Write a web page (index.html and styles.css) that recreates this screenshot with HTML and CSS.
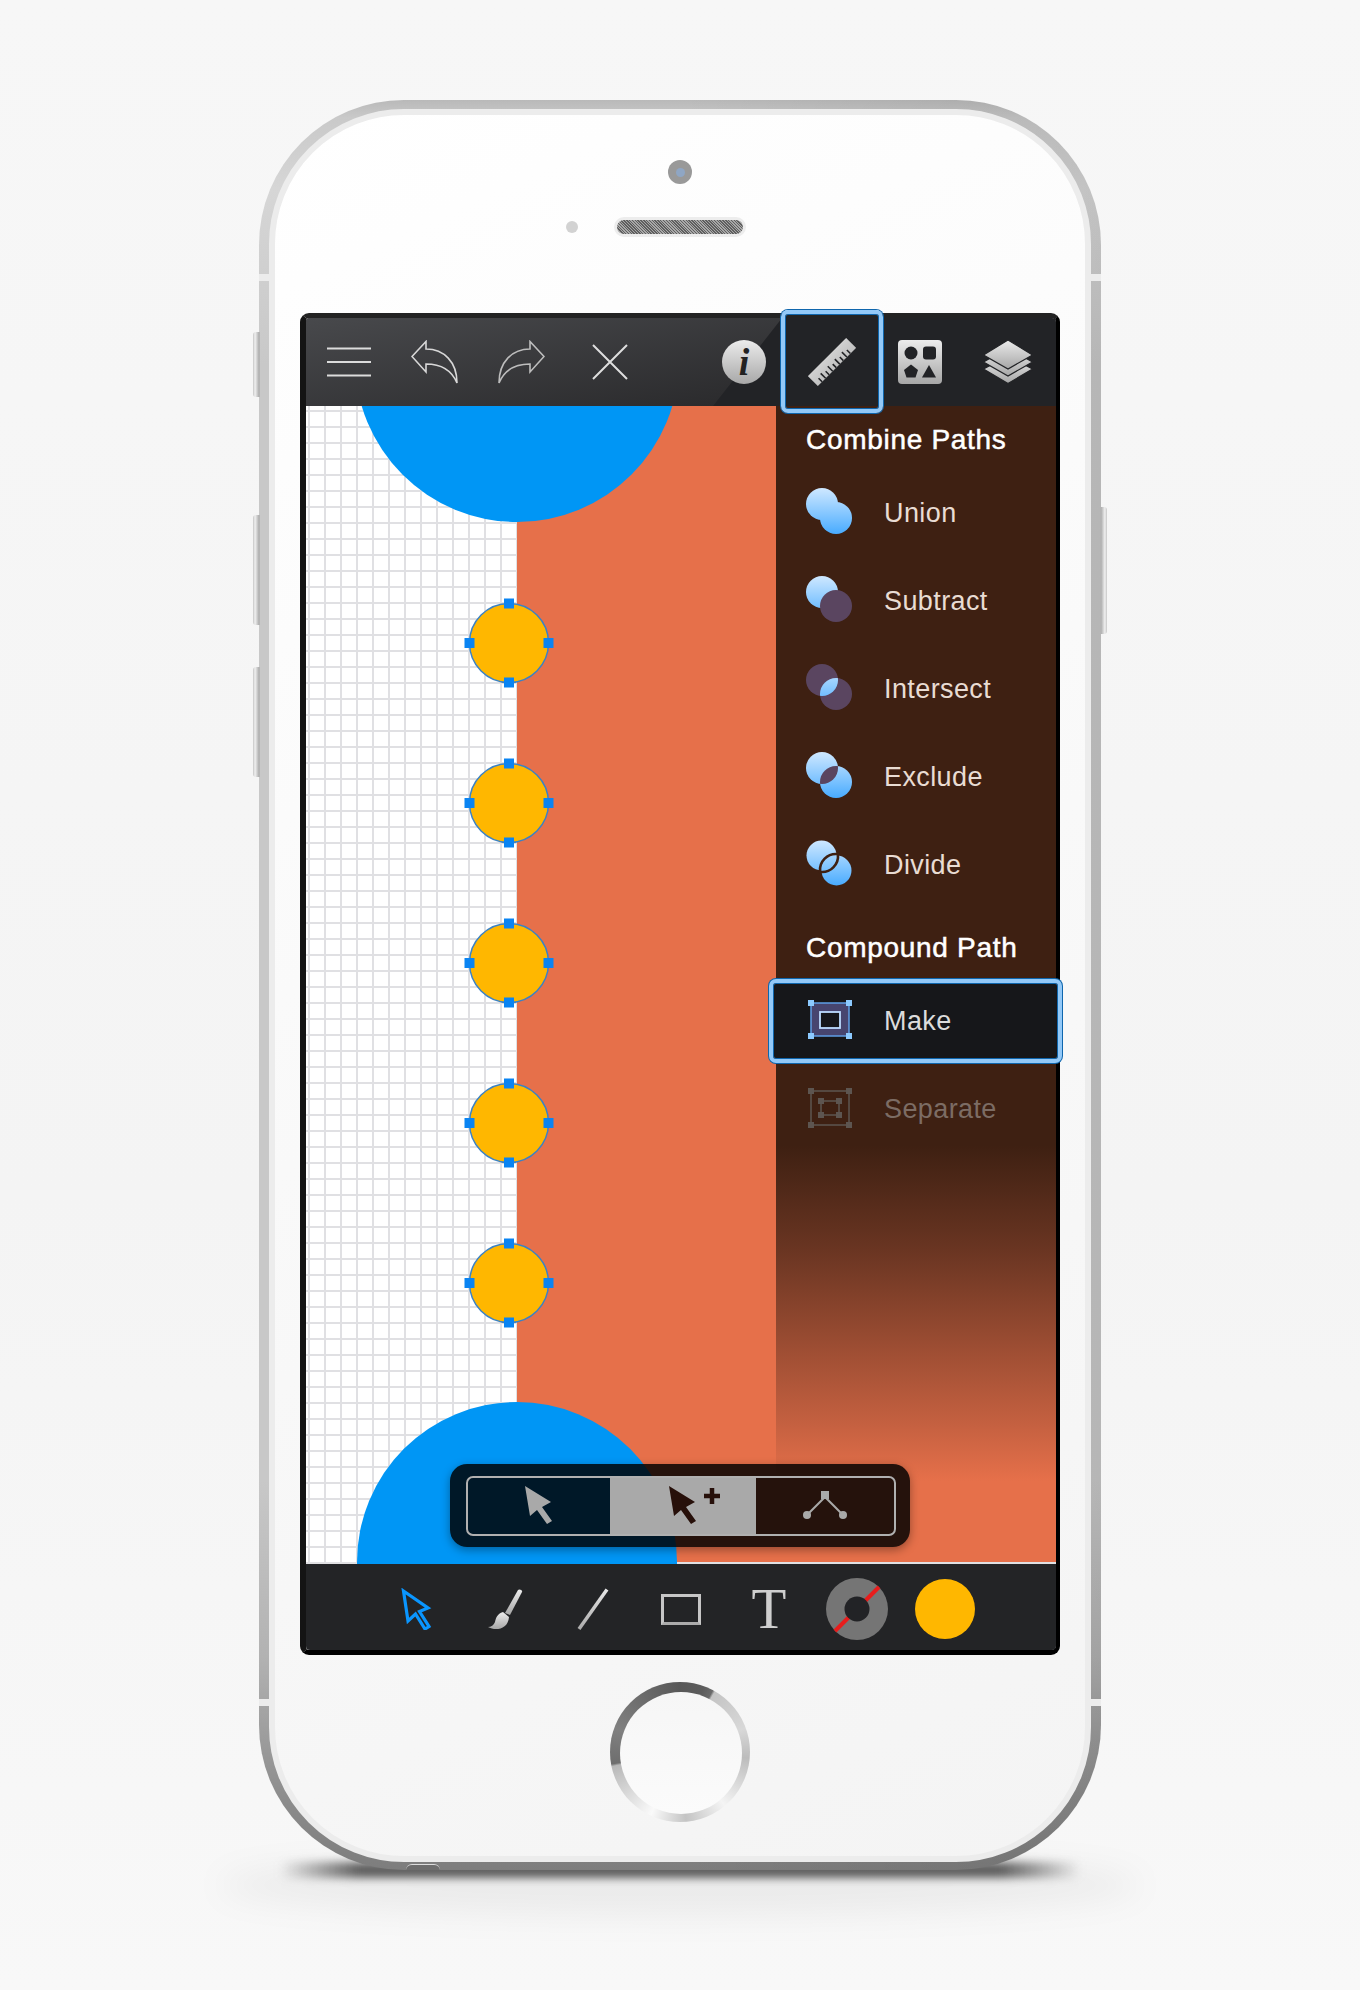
FILE: index.html
```html
<!DOCTYPE html>
<html lang="en">
<head>
    <meta charset="UTF-8">
    <meta name="viewport" content="width=device-width, initial-scale=1.0">
    <title>Combine Paths</title>
    <link rel="stylesheet" href="styles.css">
</head>
<body>
    <div class="phone">
        <span class="side-btn btn-mute"></span>
        <span class="side-btn btn-up"></span>
        <span class="side-btn btn-down"></span>
        <span class="side-btn btn-power"></span>
        <span class="band-mark mark-tl"></span>
        <span class="band-mark mark-tr"></span>
        <span class="band-mark mark-bl"></span>
        <span class="band-mark mark-br"></span>
        <span class="jack"></span>

        <div class="face">
            <div class="camera"><span class="lens"></span></div>
            <div class="sensor-row">
                <span class="sensor-dot"></span>
                <span class="speaker"></span>
            </div>

            <div class="screen">
                <!-- top toolbar -->
                <div class="topbar">
                    <div class="tool-group">
                        <button class="tool">
                            <svg width="44" height="30" viewBox="0 0 44 30"><path d="M0 1.5H44M0 15H44M0 28.500H44" fill="none" stroke="#dcdcdc" stroke-width="2"/></svg>
                        </button>
                        <button class="tool">
                            <svg width="48" height="44" viewBox="0 0 48 44"><path d="M1 16.500 15 1.500V9C33 9 46 22 46 43 41 31 30 24 15 24V32Z" fill="none" stroke="#d8d8d8" stroke-width="1.600"/></svg>
                        </button>
                        <button class="tool">
                            <svg width="48" height="44" viewBox="0 0 48 44"><path d="M47 16.500 33 1.500V9C15 9 2 22 2 43 7 31 18 24 33 24V32Z" fill="none" stroke="#bdbdbd" stroke-width="1.600"/></svg>
                        </button>
                        <button class="tool tool-close">
                            <svg width="36" height="36" viewBox="0 0 36 36"><path d="M1 1 35 35M35 1 1 35" fill="none" stroke="#dedede" stroke-width="2"/></svg>
                        </button>
                    </div>
                    <div class="tool-group">
                        <button class="tool tool-wide"><span class="info-badge">i</span></button>
                        <button class="tool tool-wide is-active">
                            <svg width="48" height="48" viewBox="0 0 48 48">
                                <defs>
                                    <linearGradient id="metal" x1="0" y1="0" x2="0" y2="1">
                                        <stop offset="0" stop-color="#ececec"/>
                                        <stop offset="1" stop-color="#a6a6a6"/>
                                    </linearGradient>
                                    <linearGradient id="metalAcross" gradientUnits="userSpaceOnUse" x1="24" y1="0" x2="24" y2="48">
                                        <stop offset="0" stop-color="#e4e4e4"/>
                                        <stop offset="1" stop-color="#adadad"/>
                                    </linearGradient>
                                </defs>
                                <g transform="rotate(-45 24 24)">
                                    <rect x="-3" y="17" width="54" height="14" fill="url(#metalAcross)"/>
                                    <path d="M3 31V26M8 31V24M13 31V26M18 31V24M23 31V26M28 31V24M33 31V26M38 31V24M43 31V26" stroke="#222326" stroke-width="1.600"/>
                                </g>
                            </svg>
                        </button>
                        <button class="tool tool-wide">
                            <svg width="44" height="44" viewBox="0 0 44 44">
                                <rect width="44" height="44" rx="4" fill="url(#metal)"/>
                                <circle cx="13" cy="13" r="6.500" fill="#222326"/>
                                <rect x="25" y="6.500" width="13" height="13" rx="3" fill="#222326"/>
                                <path d="M13 24.500 20 30 17.500 37.500H8.500L6 30Z" fill="#222326"/>
                                <path d="M31 25 38 37.500H24Z" fill="#222326"/>
                            </svg>
                        </button>
                        <button class="tool tool-wide">
                            <svg width="50" height="44" viewBox="-1 0 50 44">
                                <g fill="url(#metal)" stroke="#222326" stroke-width="1.200">
                                    <path d="M24 16 48.500 29 24 43.500 -.5 29Z"/>
                                    <path d="M24 8 48.500 22 24 36 -.5 22Z"/>
                                    <path d="M24 0 48.500 15 24 29 -.5 15Z"/>
                                </g>
                            </svg>
                        </button>
                    </div>
                </div>

                <!-- drawing area -->
                <div class="canvas">
                    <div class="paper"></div>
                    <div class="fill">
                        <div class="panel">
                            <h3 class="panel-title">Combine Paths</h3>
                            <div class="menu-row">
                                <svg class="menu-icon" viewBox="0 0 46 46">
                                    <defs>
                                        <linearGradient id="sky" gradientUnits="userSpaceOnUse" x1="0" y1="0" x2="0" y2="46">
                                            <stop offset="0" stop-color="#cfe8ff"/>
                                            <stop offset=".68" stop-color="#74bfff"/>
                                            <stop offset="1" stop-color="#48abff"/>
                                        </linearGradient>
                                        <clipPath id="leftDisc"><circle cx="16" cy="16" r="16"/></clipPath>
                                    </defs>
                                    <circle cx="16" cy="16" r="16" fill="url(#sky)"/>
                                    <circle cx="30" cy="30" r="16" fill="url(#sky)"/>
                                </svg>
                                <span>Union</span>
                            </div>
                            <div class="menu-row">
                                <svg class="menu-icon" viewBox="0 0 46 46">
                                    <circle cx="16" cy="16" r="16" fill="url(#sky)"/>
                                    <circle cx="30" cy="30" r="16" fill="#5a4560"/>
                                </svg>
                                <span>Subtract</span>
                            </div>
                            <div class="menu-row">
                                <svg class="menu-icon" viewBox="0 0 46 46">
                                    <circle cx="16" cy="16" r="16" fill="#5a4560"/>
                                    <circle cx="30" cy="30" r="16" fill="#5a4560"/>
                                    <circle cx="30" cy="30" r="16" fill="url(#sky)" clip-path="url(#leftDisc)"/>
                                </svg>
                                <span>Intersect</span>
                            </div>
                            <div class="menu-row">
                                <svg class="menu-icon" viewBox="0 0 46 46">
                                    <circle cx="16" cy="16" r="16" fill="url(#sky)"/>
                                    <circle cx="30" cy="30" r="16" fill="url(#sky)"/>
                                    <circle cx="30" cy="30" r="16" fill="#5a4560" clip-path="url(#leftDisc)"/>
                                </svg>
                                <span>Exclude</span>
                            </div>
                            <div class="menu-row">
                                <svg class="menu-icon" viewBox="0 0 46 46">
                                    <circle cx="15.500" cy="15.500" r="15" fill="url(#sky)"/>
                                    <circle cx="30.500" cy="30.500" r="15" fill="url(#sky)"/>
                                    <path d="M31.900 14.100A16 16 0 0 1 14.100 31.900 16 16 0 0 1 31.900 14.100Z" fill="url(#sky)" stroke="#3e2012" stroke-width="2.600"/>
                                </svg>
                                <span>Divide</span>
                            </div>
                            <h3 class="panel-title title-compound">Compound Path</h3>
                            <div class="menu-row is-selected">
                                <svg class="menu-icon" viewBox="0 0 46 46">
                                    <rect x="5" y="5" width="38" height="33" fill="#47456f" stroke="#5f9ee6" stroke-width="1.500"/>
                                    <rect x="14" y="14" width="20" height="16" fill="#16171a" stroke="#bddcff" stroke-width="1.800"/>
                                    <g fill="#8ccaff">
                                        <rect x="2" y="2" width="6" height="6"/><rect x="40" y="2" width="6" height="6"/>
                                        <rect x="2" y="35" width="6" height="6"/><rect x="40" y="35" width="6" height="6"/>
                                    </g>
                                </svg>
                                <span>Make</span>
                            </div>
                            <div class="menu-row is-disabled">
                                <svg class="menu-icon" viewBox="0 0 46 46">
                                    <g fill="none" stroke="#5d5550" stroke-width="1.500">
                                        <rect x="5" y="5" width="38" height="34"/>
                                        <rect x="15" y="15" width="18" height="14"/>
                                    </g>
                                    <g fill="#5d5550">
                                        <rect x="2" y="2" width="6" height="6"/><rect x="40" y="2" width="6" height="6"/>
                                        <rect x="2" y="36" width="6" height="6"/><rect x="40" y="36" width="6" height="6"/>
                                        <rect x="12" y="12" width="6" height="6"/><rect x="30" y="12" width="6" height="6"/>
                                        <rect x="12" y="26" width="6" height="6"/><rect x="30" y="26" width="6" height="6"/>
                                    </g>
                                </svg>
                                <span>Separate</span>
                            </div>
                        </div>
                    </div>

                    <span class="blob blob-top"></span>
                    <span class="blob blob-bottom"></span>

                    <div class="node-column">
                        <svg class="node" viewBox="0 0 92 92"><use href="#anchor"/></svg>
                        <svg class="node" viewBox="0 0 92 92"><use href="#anchor"/></svg>
                        <svg class="node" viewBox="0 0 92 92"><use href="#anchor"/></svg>
                        <svg class="node" viewBox="0 0 92 92"><use href="#anchor"/></svg>
                        <svg class="node" viewBox="0 0 92 92"><use href="#anchor"/></svg>
                        <svg class="node-defs" width="0" height="0">
                            <g id="anchor">
                                <circle cx="46" cy="46" r="39.500" fill="#ffb700" stroke="#3b82c4" stroke-width="1.500"/>
                                <g fill="#0a84f2">
                                    <rect x="41" y="1.500" width="10" height="10"/><rect x="41" y="80.500" width="10" height="10"/>
                                    <rect x="1.500" y="41" width="10" height="10"/><rect x="80.500" y="41" width="10" height="10"/>
                                </g>
                            </g>
                        </svg>
                    </div>

                    <!-- selection mode switch -->
                    <div class="float-bar">
                        <div class="segments">
                            <div class="segment">
                                <svg width="30" height="42" viewBox="0 0 30 42"><path d="M1 1 27 17 18 22 28 36 23 39 13 25 6 31Z" fill="#a9a9a9"/></svg>
                            </div>
                            <div class="segment is-on">
                                <svg class="add-arrow" width="56" height="42" viewBox="0 0 56 42"><path d="M1 1 27 17 18 22 28 36 23 39 13 25 6 31Z" fill="#27100a"/><path d="M36 11H52M44 3V19" stroke="#27100a" stroke-width="4.500"/></svg>
                            </div>
                            <div class="segment">
                                <svg width="44" height="32" viewBox="0 0 44 32"><path d="M4 25 22 7 40 25" fill="none" stroke="#a9a9a9" stroke-width="2"/><rect x="18" y="1" width="8" height="8" fill="#a9a9a9"/><circle cx="4" cy="25" r="4" fill="#a9a9a9"/><circle cx="40" cy="25" r="4" fill="#a9a9a9"/></svg>
                            </div>
                        </div>
                    </div>
                </div>

                <!-- bottom toolbar -->
                <div class="bottombar">
                    <button class="tool tool-wide">
                        <svg width="32" height="42" viewBox="0 0 32 42"><path d="M2.500 3 27 20 18.500 23.500 28 38.500 24 41 14.500 26 7 33Z" fill="none" stroke="#0a96ff" stroke-width="3.200"/></svg>
                    </button>
                    <button class="tool tool-wide">
                        <svg width="36" height="42" viewBox="0 0 36 42">
                            <path d="M31 2C32 .5 36 2 35 4L23 27 18 25Z" fill="url(#metal)"/>
                            <path d="M16 24C10 26 9 30 8 34 7 37 4 39 1 39 8 43 21 42 22 29Z" fill="url(#metal)"/>
                        </svg>
                    </button>
                    <button class="tool tool-wide">
                        <svg width="32" height="42" viewBox="0 0 32 42"><path d="M30 1.500 2 41" stroke="url(#metalLine)" stroke-width="3.500"/><defs><linearGradient id="metalLine" gradientUnits="userSpaceOnUse" x1="0" y1="0" x2="0" y2="42"><stop offset="0" stop-color="#e8e8e8"/><stop offset="1" stop-color="#aaa"/></linearGradient></defs></svg>
                    </button>
                    <button class="tool tool-wide"><span class="rect-tool"></span></button>
                    <button class="tool tool-wide"><span class="text-tool">T</span></button>
                    <button class="tool tool-wide">
                        <svg width="62" height="62" viewBox="0 0 62 62">
                            <circle cx="31" cy="31" r="31" fill="#757575"/>
                            <path d="M9 53 53 9" stroke="#e81c1c" stroke-width="4"/>
                            <circle cx="31" cy="31" r="12.500" fill="#222326"/>
                        </svg>
                    </button>
                    <button class="tool tool-wide"><span class="color-well"></span></button>
                </div>
            </div>

            <div class="home-btn"></div>
        </div>
    </div>
</body>
</html>
```

FILE: styles.css
```css
html {
    height: 1990px;
    overflow: hidden;
}

body {
    box-sizing: border-box;
    height: 1990px;
    margin: 0;
    padding: 100px 0 0 259px;
    overflow: hidden;
    font-family: 'Liberation Sans', Arial, sans-serif;
    background: linear-gradient(#f7f7f7, #f4f4f4 60%, #f8f8f8);
}

button {
    padding: 0;
    border: none;
    background: none;
}

/* phone body */
.phone {
    position: relative;
    box-sizing: border-box;
    width: 842px;
    height: 1770px;
    padding: 9px 10px 8px;
    border-radius: 145px;
    background:
        linear-gradient(90deg, transparent 50%, rgba(0, 0, 0, .09)),
        linear-gradient(#b9b9b9, #c9c9c9 1%, #d6d6d6 5%, #c8c8c8 15%, #c8c8c8 78%, #b2b2b2 88%, #8c8c8c 96%, #7d7d7d 100%);
}

.phone::before {
    content: "";
    position: absolute;
    z-index: -1;
    left: -40px;
    right: -40px;
    bottom: -45px;
    height: 60px;
    background: rgba(0, 0, 0, .05);
    border-radius: 50%;
    filter: blur(16px);
}

.phone::after {
    content: "";
    position: absolute;
    z-index: -1;
    left: 20px;
    right: 20px;
    bottom: -8px;
    height: 16px;
    background: linear-gradient(90deg, transparent, #5e5e5e 10%, #5e5e5e 90%, transparent);
    filter: blur(4px);
}

.face {
    box-sizing: border-box;
    height: 100%;
    display: flex;
    flex-direction: column;
    align-items: center;
    border: 6px solid #ececec;
    border-radius: 135px;
    background: linear-gradient(155deg, #fff, #f9f9f9 50%, #f4f4f4);
}

.side-btn {
    position: absolute;
    width: 7px;
    left: -6px;
    border-radius: 3px 0 0 3px;
    background: linear-gradient(90deg, #c6c6c6, #f0f0f0 30%, #b4b4b4 80%);
}

.btn-mute { top: 232px; height: 65px; }
.btn-up { top: 415px; height: 110px; }
.btn-down { top: 567px; height: 110px; }
.btn-power { top: 407px; left: auto; right: -6px; height: 127px; border-radius: 0 3px 3px 0; background: linear-gradient(270deg, #c6c6c6, #f0f0f0 30%, #b4b4b4 80%); }

.band-mark {
    position: absolute;
    width: 10px;
    height: 7px;
    background: #ececec;
}

.mark-tl { left: 0; top: 174px; }
.mark-tr { right: 0; top: 174px; }
.mark-bl { left: 0; top: 1599px; }
.mark-br { right: 0; top: 1599px; }

.jack {
    position: absolute;
    left: 147px;
    bottom: 0;
    width: 34px;
    height: 5px;
    border-radius: 17px 17px 0 0;
    background: #6d6d6d;
    border-top: 1px solid #ddd;
}

/* camera and speaker */
.camera {
    width: 24px;
    height: 24px;
    margin-top: 45px;
    display: flex;
    align-items: center;
    justify-content: center;
    border-radius: 50%;
    background: #999;
}

.lens {
    width: 9px;
    height: 9px;
    border-radius: 50%;
    background: #8fa6c4;
}

.sensor-row {
    width: 100%;
    margin-top: 33px;
    display: grid;
    grid-template-columns: 1fr auto 1fr;
    align-items: center;
}

.sensor-dot {
    width: 12px;
    height: 12px;
    margin-right: 36px;
    justify-self: end;
    border-radius: 50%;
    background: #d2d2d2;
}

.speaker {
    width: 126px;
    height: 14px;
    grid-column: 2;
    border: 3px solid #ededed;
    border-radius: 10px;
    background: repeating-linear-gradient(45deg, #5f5f5f 0 1px, #a8a8a8 1px 2px);
}

/* screen */
.screen {
    box-sizing: border-box;
    width: 760px;
    height: 1342px;
    margin-top: 76px;
    display: flex;
    flex-direction: column;
    border-style: solid;
    border-width: 5px 4px 5px 6px;
    border-color: #232323 #000 #000 #141414;
    border-radius: 9px;
}

.topbar {
    position: relative;
    height: 88px;
    flex: none;
    display: flex;
    justify-content: space-between;
    padding-right: 4px;
    border-radius: 4px 4px 0 0;
    background: #222326;
}

.topbar::before {
    content: "";
    position: absolute;
    inset: 0;
    border-radius: 4px 0 0 0;
    background: linear-gradient(170deg, #48494c, #2a2a2c 75%);
    clip-path: polygon(0 0, 476px 0, 407px 100%, 0 100%);
}

.tool-group {
    position: relative;
    display: flex;
    align-items: center;
}

.tool {
    position: relative;
    width: 86px;
    height: 100%;
    display: flex;
    align-items: center;
    justify-content: center;
    flex: none;
}

.tool-wide {
    width: 88px;
}

.tool-close {
    margin-left: 3px;
}

.is-active::after {
    content: "";
    position: absolute;
    z-index: 3;
    top: -8px;
    bottom: -7px;
    left: -7px;
    right: -7px;
    border: 4px solid #93c9f8;
    border-radius: 7px;
    box-shadow: 0 0 0 1px #0f66ad, inset 0 0 0 1px #0f66ad;
}

.info-badge {
    width: 44px;
    height: 44px;
    display: block;
    border-radius: 50%;
    font-family: 'Liberation Serif', serif;
    font-size: 38px;
    font-style: italic;
    font-weight: bold;
    line-height: 44px;
    text-align: center;
    color: #222;
    background: linear-gradient(#ececec, #a8a8a8);
}

/* canvas */
.canvas {
    position: relative;
    flex: 1;
    display: flex;
    background-color: #fff;
    background-image: linear-gradient(90deg, #e0e0e3 2px, transparent 2px), linear-gradient(#e0e0e3 2px, transparent 2px);
    background-size: 16px 16px;
    background-position: 2px 4px;
}

.paper {
    flex: 0 0 211px;
}

.fill {
    flex: 1;
    margin-bottom: 2px;
    display: flex;
    justify-content: flex-end;
    background: #e6704a;
}

.panel {
    box-sizing: border-box;
    width: 280px;
    position: relative;
    z-index: 2;
    padding: 14px 0 0;
    background: linear-gradient(#3e2012 64%, #6a3522 73%, #c46040 88%, #e6704a 93%);
}

.panel-title {
    margin: 0 0 9px;
    padding-left: 30px;
    font-size: 28px;
    font-weight: normal;
    line-height: 40px;
    letter-spacing: .7px;
    color: #fff;
    -webkit-text-stroke: .5px #fff;
}

.title-compound {
    margin: 19px 0 9px;
}

.menu-row {
    position: relative;
    height: 88px;
    padding-left: 30px;
    display: flex;
    align-items: center;
    gap: 32px;
    font-size: 27px;
    letter-spacing: .4px;
    color: #e9dcd3;
}

.menu-icon {
    width: 46px;
    height: 46px;
    margin-bottom: 4px;
    flex: none;
}

.is-selected {
    color: #dcdcdc;
}

.is-selected .menu-icon {
    position: relative;
    margin-bottom: 0;
}

.is-selected span {
    position: relative;
}

.is-selected::before {
    content: "";
    position: absolute;
    top: 2px;
    bottom: 2px;
    left: -7px;
    right: -6px;
    border: 4px solid #93c9f8;
    border-radius: 7px;
    background: #16171a;
    box-shadow: 0 0 0 1px #0f66ad, inset 0 0 0 1px #0f66ad;
}

.is-disabled {
    color: #7c6c64;
}

.is-disabled .menu-icon {
    margin-bottom: 0;
}

/* shapes on the canvas */
.blob {
    position: absolute;
    border-radius: 50%;
    background: #0096f5;
}

.blob-top {
    left: 49px;
    top: -208px;
    width: 324px;
    height: 324px;
    clip-path: inset(208px 0 0 0);
}

.blob-bottom {
    left: 51px;
    top: 996px;
    width: 320px;
    height: 320px;
    clip-path: inset(0 0 158px 0);
}

.node-column {
    position: absolute;
    left: 157px;
    top: 191px;
    display: flex;
    flex-direction: column;
    gap: 68px;
}

.node {
    width: 92px;
    height: 92px;
    display: block;
}

.node-defs {
    position: absolute;
}

/* selection mode switch */
.float-bar {
    position: absolute;
    z-index: 2;
    left: 144px;
    bottom: 17px;
    box-sizing: border-box;
    width: 460px;
    height: 83px;
    padding: 12px 14px 11px 16px;
    border-radius: 17px;
    background: rgba(0, 0, 0, .84);
    box-shadow: 0 3px 10px rgba(0, 0, 0, .35);
}

.segments {
    height: 100%;
    box-sizing: border-box;
    display: grid;
    grid-template-columns: 142px 146px 1fr;
    overflow: hidden;
    border: 2px solid #b0b0b0;
    border-radius: 7px;
}

.segment {
    display: flex;
    align-items: center;
    justify-content: center;
}

.is-on {
    background: #a9a9a9;
}

.add-arrow {
    margin-left: 25px;
}

/* bottom toolbar */
.bottombar {
    box-sizing: border-box;
    height: 86px;
    flex: none;
    display: flex;
    justify-content: center;
    padding-top: 4px;
    border-radius: 0 0 4px 4px;
    background: #232426;
}

.rect-tool {
    box-sizing: border-box;
    width: 40px;
    height: 31px;
    border: 3px solid;
    border-color: #c6c6c6 #c6c6c6 #ababab;
}

.text-tool {
    font-family: 'Liberation Serif', serif;
    font-size: 57px;
    line-height: 60px;
    color: #cfcfcf;
}

.color-well {
    width: 60px;
    height: 60px;
    border-radius: 50%;
    background: #ffb700;
}

/* home button */
.home-btn {
    width: 140px;
    height: 140px;
    margin-top: 27px;
    display: flex;
    align-items: center;
    justify-content: center;
    border-radius: 50%;
    background: conic-gradient(#585858 0deg, #5c5c5c 20deg, #6a6a6a 28deg, #c4c4c4 30deg, #d8d8d8 70deg, #bcbcbc 95deg, #f4f4f4 140deg, #c4c4c4 175deg, #fafafa 205deg, #bcbcbc 255deg, #b8b8b8 258deg, #6e6e6e 260deg, #808080 290deg, #585858 360deg);
}

.home-btn::after {
    content: "";
    width: 122px;
    height: 122px;
    margin: 2px 0 0 2px;
    border-radius: 50%;
    background: linear-gradient(#f6f6f6, #fbfbfb);
}
```
